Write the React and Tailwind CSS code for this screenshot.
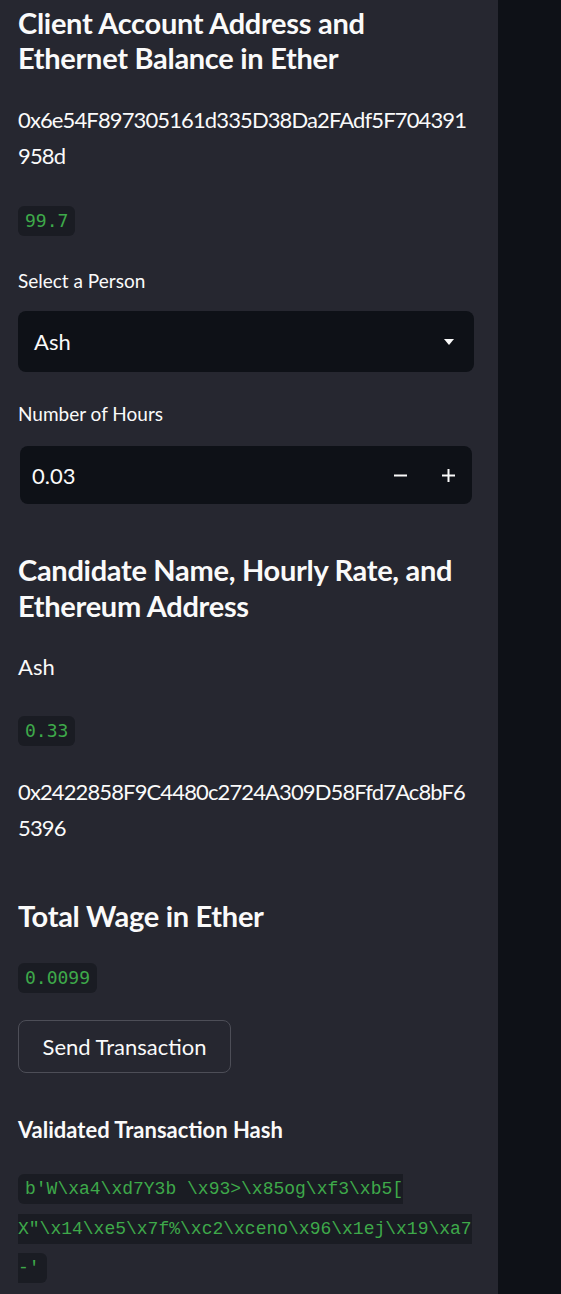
import { useState } from "react";

const sans = "font-['Lato',_'Noto_Sans',_sans-serif]";
const mono = "font-['DejaVu_Sans_Mono',_'Liberation_Mono',_monospace]";

function Code({ children }) {
  return (
    <code
      className={`${mono} inline-block h-[30px] rounded-[6px] bg-[#1a1c23] px-[7px] text-[18px] leading-[30px] text-[#3ea94a]`}
    >
      {children}
    </code>
  );
}

export default function App() {
  const [person] = useState("Ash");
  const [hours] = useState("0.03");

  return (
    <div className={`${sans} flex h-screen w-full bg-[#0e1117] text-[#fafafa]`}>
      <aside className="w-[498px] shrink-0 overflow-hidden bg-[#262730] pl-[18px] pr-[24px]">
        <h2 className="mt-[5px] text-[29px] font-bold leading-[35px] tracking-[-0.01em]">
          Client Account Address and Ethernet Balance in Ether
        </h2>
        <p className="mt-[27px] text-[22px] leading-[36px] tracking-[-0.04em]">
          0x6e54F897305161d335D38Da2FAdf5F704391
          <br />
          958d
        </p>
        <div className="mt-[32px]">
          <Code>99.7</Code>
        </div>

        <label className="mt-[30px] block text-[19px] leading-[30px]">Select a Person</label>
        <div className="mt-[15px] flex h-[61px] items-center justify-between rounded-[8px] bg-[#0e1117] pl-[16px] pr-[20px]">
          <span className="text-[22px]">{person}</span>
          <svg width="10" height="6" viewBox="0 0 10 6">
            <path d="M0 0h10L5 6z" fill="#fafafa" />
          </svg>
        </div>

        <label className="mt-[27px] block text-[19px] leading-[30px]">Number of Hours</label>
        <div className="mx-[2px] mt-[17px] flex h-[58px] items-center rounded-[8px] bg-[#0e1117] pl-[12px] pr-[17px]">
          <span className="flex-1 text-[22px]">{hours}</span>
          <div className="flex items-center gap-[35px]">
            <svg width="13" height="13" viewBox="0 0 13 13">
              <path d="M0 5.5h13v2H0z" fill="#fafafa" />
            </svg>
            <svg width="13" height="13" viewBox="0 0 13 13">
              <path d="M0 5.5h13v2H0zM5.5 0h2v13h-2z" fill="#fafafa" />
            </svg>
          </div>
        </div>

        <h2 className="mt-[48px] text-[29px] font-bold leading-[36px] tracking-[-0.01em]">
          Candidate Name, Hourly Rate, and Ethereum Address
        </h2>
        <p className="mt-[25px] text-[22px] leading-[36px]">Ash</p>
        <div className="mt-[31px]">
          <Code>0.33</Code>
        </div>
        <p className="mt-[28px] text-[22px] leading-[36px] tracking-[-0.04em]">
          0x2422858F9C4480c2724A309D58Ffd7Ac8bF6
          <br />
          5396
        </p>

        <h2 className="mt-[52px] text-[29px] font-bold leading-[35px] tracking-[-0.01em]">
          Total Wage in Ether
        </h2>
        <div className="mt-[30px]">
          <Code>0.0099</Code>
        </div>
        <button className="mt-[27px] flex h-[53px] w-[213px] items-center justify-center rounded-[8px] border border-[#4d4e57] bg-[#262730] text-[22px]">
          Send Transaction
        </button>

        <h3 className="mt-[42px] text-[22px] font-bold leading-[30px]">Validated Transaction Hash</h3>
        <p className={`${mono} mt-[24px] text-[18px] leading-[38.5px] text-[#3ea94a]`}>
          <code className="rounded-[6px] bg-[#1a1c23] px-[7px] py-[5px]">
            {" "}b'W\xa4\xd7Y3b \x93&gt;\x85og\xf3\xb5[
            <br />
            X"\x14\xe5\x7f%\xc2\xceno\x96\x1ej\x19\xa7
            <br />
            -'
          </code>
        </p>
      </aside>
      <main className="flex-1" />
    </div>
  );
}
